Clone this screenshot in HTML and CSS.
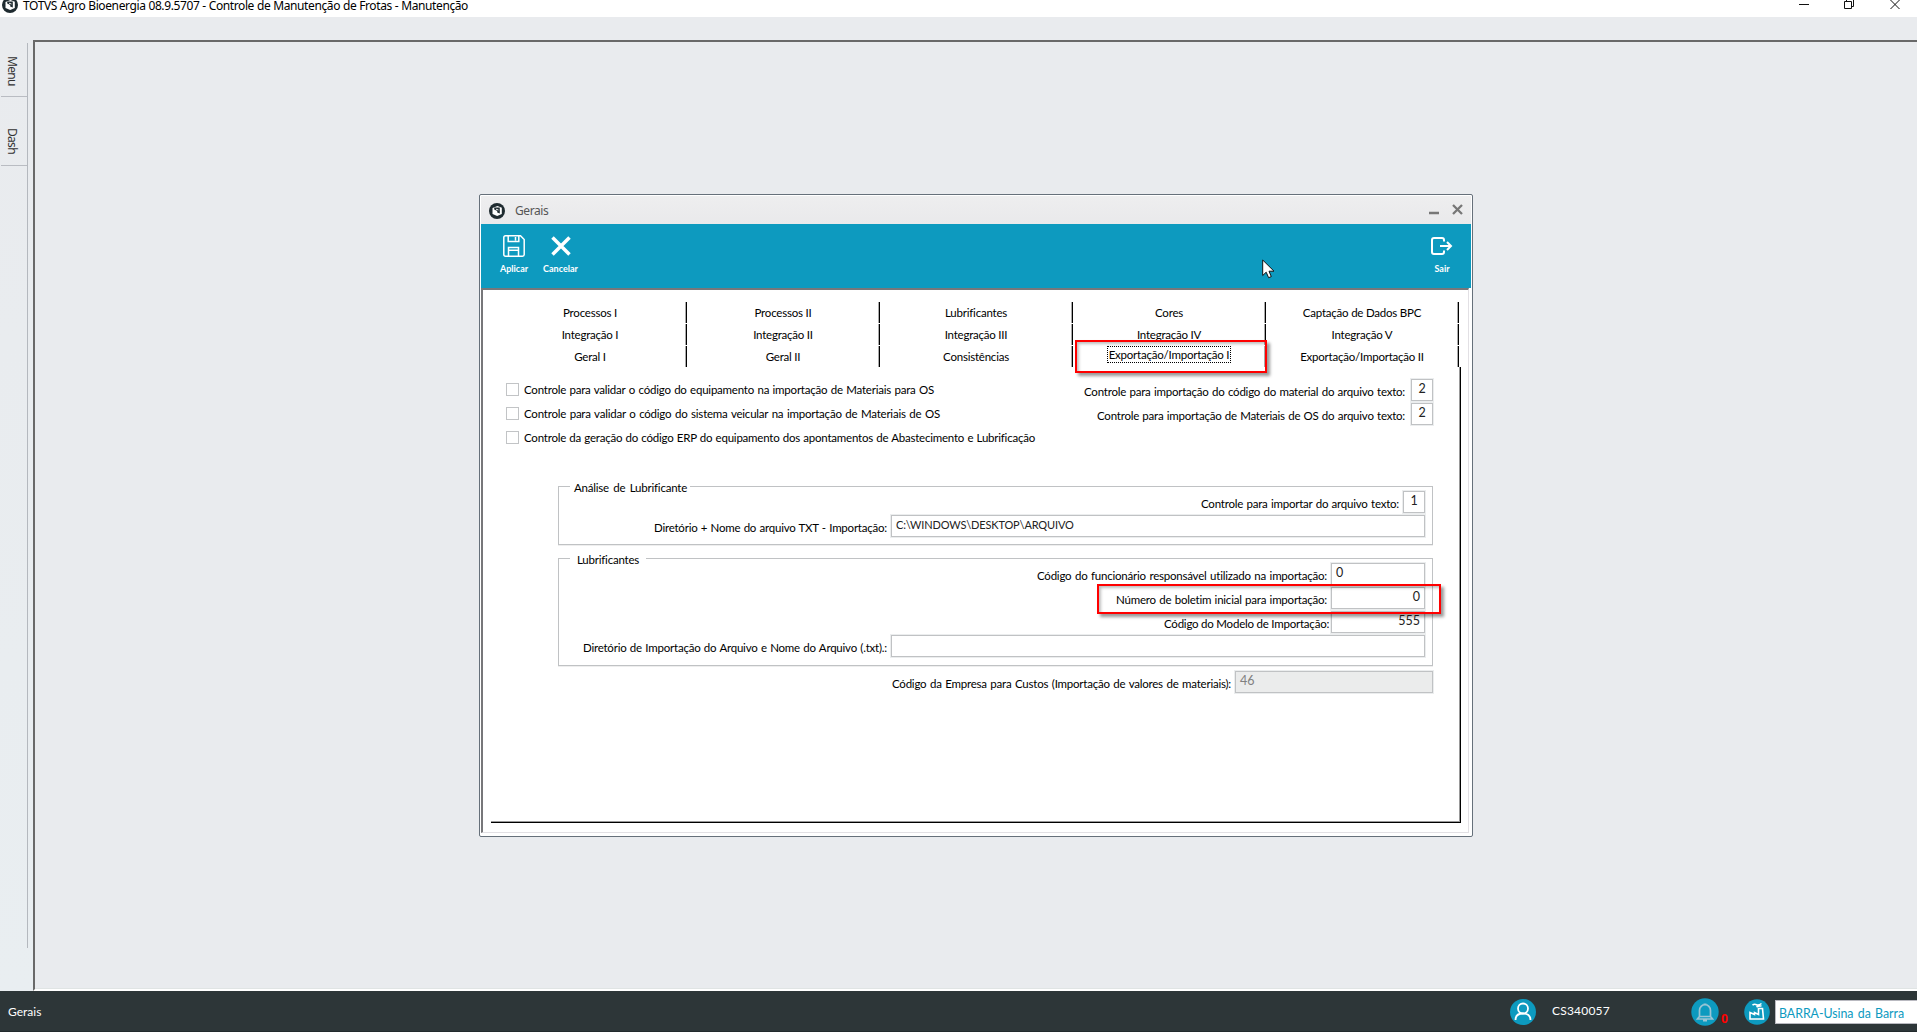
FILE: index.html
```html
<!DOCTYPE html>
<html lang="pt-BR">
<head>
<meta charset="utf-8">
<title>TOTVS Agro Bioenergia</title>
<link rel="stylesheet" href="styles.css">
</head>
<body>
<svg width="0" height="0" class="defs"><defs>
<symbol id="logo" viewBox="0 0 16 16"><circle cx="8" cy="8" r="8" fill="#1f2b30"/><path d="M3.500 5 8.500 3 12.800 4.800V11L8.200 13 3.500 11Z" fill="#fff"/><path d="M5.200 4.600H10.800V10.500L8.200 9.400V8L5.200 6.600Z" fill="#1f2b30"/><path d="M7 6.200 9.500 7" stroke="#fff" stroke-width=".9"/></symbol>
</defs></svg>
<header class="titlebar">
  <svg class="app-logo"><use href="#logo"/></svg>
  <span class="app-title fit">TOTVS Agro Bioenergia 08.9.5707 - Controle de Manutenção de Frotas - Manutenção</span>
  <svg class="win-buttons" width="102" height="12" viewBox="0 0 102 12" fill="none" stroke="#111" stroke-width="1"><path d="M0 4.500H10M45.500 1.500H52.500V8.500H45.500ZM47.500 1V-1.500H54.500V6.500H53M91.500 0 100.500 9M100.500 0 91.500 9"/></svg>
</header>
<main class="workspace">
  <nav class="rail"><div class="rail-tabs"><span class="rail-tab menu">Menu</span><span class="rail-tab dash">Dash</span></div></nav>
  <section class="desktop"></section>
</main>
<footer class="status">
  <span class="status-name fit">Gerais</span>
  <svg class="ic-user" width="26" height="26" viewBox="0 0 26 26"><circle cx="13" cy="13" r="13" fill="#0d9abf"/><g fill="none" stroke="#fff" stroke-width="1.800"><circle cx="13" cy="9.500" r="5"/><path d="M5.500 21C5.500 16.800 8.500 14.500 13 14.500S20.500 16.800 20.500 21"/></g></svg>
  <span class="user-id fit">CS340057</span>
  <svg class="ic-bell" width="28" height="28" viewBox="0 0 28 28"><circle cx="14" cy="14" r="13.700" fill="#0d9abf"/><g fill="none" stroke="#9bc5d5" stroke-width="1.700"><path d="M8.500 18.500V12.500A5.500 5.800 0 0 1 19.500 12.500V18.500L21.500 21H6.500ZM8.500 18.500H19.500M12.500 6.300H15.500M12 22.700H16"/></g></svg>
  <span class="bell-count">0</span>
  <svg class="ic-plant" width="26" height="26" viewBox="0 0 26 26"><circle cx="13" cy="13" r="12.800" fill="#0d9abf"/><path d="M6 20V13.500L10.500 15.500V13.500L14.500 15.500V9.500H18.500L19.500 20ZM8.500 6.200Q10.500 4.500 12.500 5.700T17.500 4.500M12.500 8Q14.500 6.500 17.500 7" fill="none" stroke="#fff" stroke-width="1.600"/></svg>
  <div class="unit"><span class="fit">BARRA-Usina da Barra</span></div>
</footer>

<section class="dialog">
  <div class="dlg-head">
    <svg class="dlg-logo"><use href="#logo"/></svg>
    <span class="dlg-title fit">Gerais</span>
    <svg class="dlg-buttons" width="34" height="12" viewBox="0 0 34 12" fill="none" stroke="#777" stroke-width="2.300"><path d="M0 9H10M24 1 33 10M33 1 24 10"/></svg>
  </div>
  <div class="toolbar">
    <div class="tool save"><svg width="22" height="22" viewBox="0 0 22 22" fill="none" stroke="#fff" stroke-width="1.500"><path d="M2.500 .8H17.500L21.200 4.500V19.500Q21.200 21.200 19.500 21.200H2.500Q.8 21.200 .8 19.500V2.500Q.8 .8 2.500 .8Z"/><path d="M5.200 1V6.500H15.800V1M12.500 2V5.500M5.500 21V12.500H15.500V21M5.500 15.200H15.500"/></svg><span class="fit">Aplicar</span></div>
    <div class="tool cancel"><svg width="20" height="22" viewBox="0 0 20 22" fill="none" stroke="#fff" stroke-width="3.500"><path d="M1.500 2.500 18.500 19.500M18.500 2.500 1.500 19.500"/></svg><span class="fit">Cancelar</span></div>
    <div class="tool exit"><svg width="22" height="22" viewBox="0 0 22 22" fill="none" stroke="#fff" stroke-width="2"><path d="M13 6.500V5Q13 3 11 3H3Q1 3 1 5V17Q1 19 3 19H11Q13 19 13 17V15.500M9 11H20M16 7 20 11 16 15"/></svg><span class="fit">Sair</span></div>
  </div>
  <div class="dlg-body">
    <div class="tabs">
      <span class="tab">Processos I</span><span class="tab">Processos II</span><span class="tab">Lubrificantes</span><span class="tab">Cores</span><span class="tab">Captação de Dados BPC</span>
      <span class="tab">Integração I</span><span class="tab">Integração II</span><span class="tab">Integração III</span><span class="tab">Integração IV</span><span class="tab">Integração V</span>
      <span class="tab">Geral I</span><span class="tab">Geral II</span><span class="tab">Consistências</span><span class="tab active"><b class="focus">Exportação/Importação I</b></span><span class="tab">Exportação/Importação II</span>
    </div>
    <div class="panel">
      <div class="top">
        <div class="checks">
          <label class="check"><i></i><span class="fit w410">Controle para validar o código do equipamento na importação de Materiais para OS</span></label>
          <label class="check"><i></i><span class="fit w416">Controle para validar o código do sistema veicular na importação de Materiais de OS</span></label>
          <label class="check"><i></i><span class="fit w511">Controle da geração do código ERP do equipamento dos apontamentos de Abastecimento e Lubrificação</span></label>
        </div>
        <div class="codes">
          <div class="row"><span class="fit w321">Controle para importação do código do material do arquivo texto:</span><div class="field tiny">2</div></div>
          <div class="row"><span class="fit w308">Controle para importação de Materiais de OS do arquivo texto:</span><div class="field tiny">2</div></div>
        </div>
      </div>
      <div class="group analysis">
        <span class="legend"><span class="fit w113">Análise de Lubrificante</span></span>
        <div class="row"><span class="fit w198">Controle para importar do arquivo texto:</span><div class="field tiny">1</div></div>
        <div class="row"><span class="fit w233">Diretório + Nome do arquivo TXT - Importação:</span><div class="field path"><span class="fit w178">C:\WINDOWS\DESKTOP\ARQUIVO</span></div></div>
      </div>
      <div class="group lubes">
        <span class="legend"><span class="fit w63">Lubrificantes</span></span>
        <div class="row"><span class="fit w290">Código do funcionário responsável utilizado na importação:</span><div class="field mid">0</div></div>
        <div class="row"><span class="fit w211">Número de boletim inicial para importação:</span><div class="field mid num">0</div></div>
        <div class="row"><span class="fit w163">Código do Modelo de Importação:</span><div class="field mid num">555</div></div>
        <div class="row"><span class="fit w304">Diretório de Importação do Arquivo e Nome do Arquivo (.txt).:</span><div class="field path"></div></div>
      </div>
      <div class="row company"><span class="fit w339">Código da Empresa para Custos (Importação de valores de materiais):</span><div class="field wide off">46</div></div>
    </div>
  </div>
</section>
<div class="mark mark-tab"></div>
<div class="mark mark-number"></div>
<svg class="cursor" width="14" height="21" viewBox="0 0 14 21"><path d="M.7 1V16.500L4.200 13.200 6.600 18.700 9.300 17.600 7 12.200H12Z" fill="#fff" stroke="#111" stroke-width="1"/></svg>
</body>
</html>
```
FILE: styles.css
```css
* { box-sizing: border-box; }
body { margin: 0; width: 1917px; height: 1032px; overflow: hidden; position: relative; display: flex; flex-direction: column; background: #e9ebee; color: #000; font: 11.5px/24px Lato, "Noto Sans", sans-serif; letter-spacing: -.22px; }
svg { display: block; flex: none; }
.defs { position: absolute; }
.fit { display: block; flex: none; white-space: nowrap; text-align: justify; text-align-last: justify; }

.titlebar { height: 17px; background: #fff; display: flex; align-items: flex-start; padding-left: 2px; }
.app-logo { width: 16px; height: 16px; margin: -3px 5px 0 0; }
.app-title { width: 445px; font: 12px/16px "Noto Sans", sans-serif; letter-spacing: -.39px; margin-top: -2px; }
.win-buttons { margin: 0 16px 0 auto; }

.workspace { flex: 1; display: flex; }
.rail { width: 33px; padding: 26px 0 0 1px; background: linear-gradient(#e9ebee, #e9eef1); }
.rail-tabs { width: 27px; height: 905px; border-right: 1px solid #b4b8be; display: flex; flex-direction: column; }
.rail-tab { writing-mode: vertical-rl; width: 26px; border-bottom: 1px solid #b9bcc2; line-height: 20px; padding-right: 5px; color: #333; font-family: "Noto Sans", sans-serif; font-size: 12px; }
.menu { height: 54px; padding-top: 13px; letter-spacing: -.7px; }
.dash { height: 69px; padding-top: 31px; letter-spacing: -.7px; }
.desktop { flex: 1; margin-top: 23px; border: solid; border-width: 2px 0 2px 2px; border-color: #696969 #fff #fff #696969; box-shadow: inset 0 -1px #e0e4e4; }

.status { height: 41px; background: #2d3638; color: #fff; display: flex; align-items: center; padding-left: 8px; border-bottom: 1px solid #222a2c; }
.status-name { width: 34px; margin-top: 2px; font-size: 12px; letter-spacing: 0; }
.ic-user { margin: 2px 16px 0 1468px; }
.user-id { width: 58px; font-size: 12px; letter-spacing: .2px; }
.ic-bell { margin: 2px 2px 0 81px; }
.bell-count { width: 8px; color: #f00; font: bold 12px/14px "Noto Sans", sans-serif; margin-top: 15px; }
.ic-plant { margin: 2px 5px 0 15px; }
.unit { flex: 1; height: 24px; border: 1px solid #b9b9c0; border-right: 0; background: #fff; color: #0d9abf; padding-left: 3px; font-size: 12.4px; letter-spacing: -.05px; margin-top: 2px; }
.unit .fit { width: 125px; line-height: 25px; }

.dialog { position: absolute; left: 479px; top: 194px; width: 994px; height: 643px; border: 1px solid #66707a; border-radius: 2px; background: #fff; padding: 1px; display: flex; flex-direction: column; }
.dlg-head { height: 28px; display: flex; align-items: flex-start; padding-left: 8px; background: linear-gradient(#eeeeef, #e9e9eb); }
.dlg-logo { width: 16px; height: 16px; margin-top: 7px; }
.dlg-title { width: 32px; margin: 3px 0 0 10px; color: #555; font: 12px/24px "Noto Sans", sans-serif; letter-spacing: -.4px; }
.dlg-buttons { margin: 8px 8px 0 auto; }
.toolbar { height: 64px; background: #0d9abf; color: #fff; display: flex; padding: 11px 21px 0 19px; }
.tool { display: flex; flex-direction: column; align-items: center; font: bold 9px/12px Lato, sans-serif; letter-spacing: 0; gap: 6px; }
.save { width: 28px; }
.cancel { width: 35px; margin-left: 15px; }
.exit { width: 16px; margin-left: auto; }
.dlg-body { flex: 1; border: solid; border-width: 2px 1px 1px 2px; border-color: #77777a #e2e0e4 #e2e0e4 #77777a; margin: 0 2px 2px 0; padding: 12px 0 0 8px; }
.tabs { margin-left: 3px; width: 965px; display: grid; grid-template-columns: repeat(5, 193px); grid-auto-rows: 22px; }
.tab { height: 21px; text-align: center; line-height: 21px; border-right: 1px solid #000; box-shadow: inset -1px 0 #aaa; }
.focus { display: block; position: relative; top: 0; margin: 0 auto; font-weight: normal; height: 17px; line-height: 16px; width: 124px; white-space: nowrap; border: 1px dotted #000; }
.panel { width: 970px; height: 456px; margin-top: -1px; border: solid #000; border-width: 0 1px 1px 0; box-shadow: inset -1px -1px #999; padding: 12px 27px 0 15px; }
.top { display: flex; justify-content: space-between; height: 107px; }
.checks { padding-top: 4px; }
.check { display: flex; height: 24px; }
.check i { width: 13px; height: 13px; border: 1px solid #c2c4c6; margin-right: 5px; }
.check .fit { line-height: 14px; }
.row { display: flex; justify-content: flex-end; align-items: flex-start; height: 24px; }
.row > .fit { line-height: 26px; }
.codes .row { gap: 6px; }
.group .row { gap: 4px; }
.field { height: 22px; border: 1px solid #c0c2c4; box-shadow: 0 0 0 1px #ebedee; background: #fff; line-height: 17px; padding: 0 4px; font-size: 12.5px; letter-spacing: 0; color: #222; }
.tiny { width: 22px; text-align: center; padding: 0; }
.mid { width: 94px; }
.num { text-align: right; }
.path { width: 534px; font-size: 11px; letter-spacing: -.15px; }
.wide { width: 198px; }
.off { background: #ebecec; color: #808080; }
.group { position: relative; margin-left: 52px; border: 1px solid #c0c2c4; box-shadow: 0 1px #eee; padding: 4px 7px 0 0; }
.analysis { height: 59px; }
.lubes { height: 108px; margin-top: 13px; }
.legend { position: absolute; left: 11px; top: -8px; background: #fff; line-height: 18px; padding: 0 3px 0 4px; }
.lubes .legend { padding: 0 6px 0 7px; }
.company { margin-top: 5px; gap: 4px; }
.w63 { width: 63px; } .w113 { width: 113px; } .w163 { width: 163px; } .w178 { width: 178px; }
.w198 { width: 198px; } .w211 { width: 211px; } .w233 { width: 233px; } .w290 { width: 290px; }
.w304 { width: 304px; } .w308 { width: 308px; } .w321 { width: 321px; } .w339 { width: 339px; }
.w410 { width: 410px; } .w416 { width: 416px; } .w511 { width: 511px; }
.mark { position: absolute; border: 2px solid #f00; box-shadow: 3px 3px 3px rgba(0,0,0,.4), inset 2px 2px 3px rgba(0,0,0,.25); }
.mark-tab { left: 1075px; top: 340px; width: 192px; height: 33px; }
.mark-number { left: 1097px; top: 584px; width: 344px; height: 30px; }
.cursor { position: absolute; left: 1262px; top: 259px; }
```
